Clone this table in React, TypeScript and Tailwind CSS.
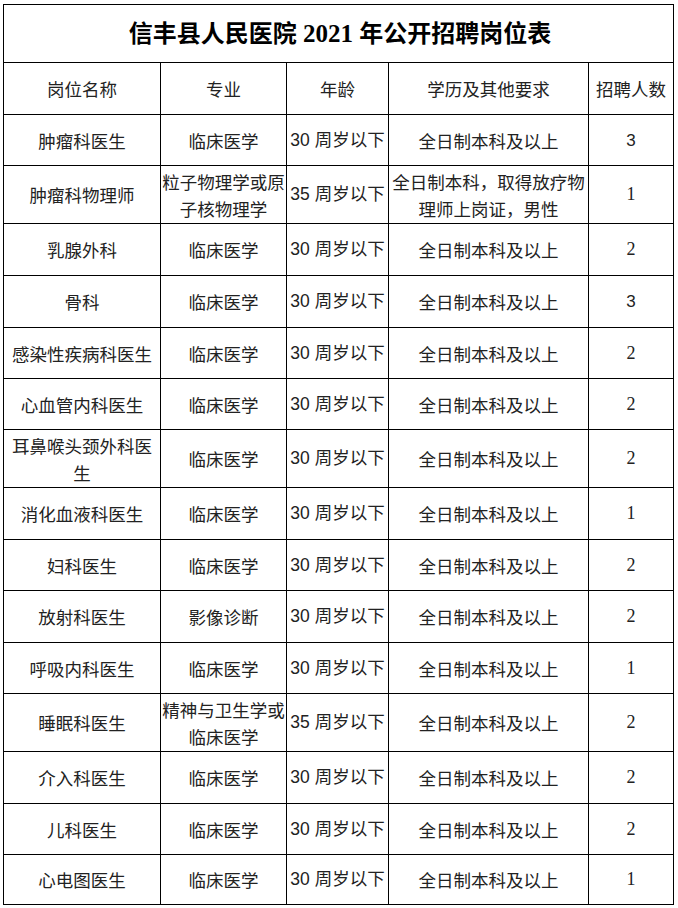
import React from "react";

type Row = {
  name: React.ReactNode;
  major: React.ReactNode;
  age: string;
  edu: React.ReactNode;
  count: string;
  h: string;
};

const rows: Row[] = [
  { name: "肿瘤科医生", major: "临床医学", age: "30 周岁以下", edu: "全日制本科及以上", count: "3", h: "h-[51px]" },
  {
    name: "肿瘤科物理师",
    major: (<>粒子物理学或原<br />子核物理学</>),
    age: "35 周岁以下",
    edu: (<>全日制本科，取得放疗物<br />理师上岗证，男性</>),
    count: "1",
    h: "h-[58px]",
  },
  { name: "乳腺外科", major: "临床医学", age: "30 周岁以下", edu: "全日制本科及以上", count: "2", h: "h-[52px]" },
  { name: "骨科", major: "临床医学", age: "30 周岁以下", edu: "全日制本科及以上", count: "3", h: "h-[52px]" },
  { name: "感染性疾病科医生", major: "临床医学", age: "30 周岁以下", edu: "全日制本科及以上", count: "2", h: "h-[51px]" },
  { name: "心血管内科医生", major: "临床医学", age: "30 周岁以下", edu: "全日制本科及以上", count: "2", h: "h-[51px]" },
  { name: (<>耳鼻喉头颈外科医<br />生</>), major: "临床医学", age: "30 周岁以下", edu: "全日制本科及以上", count: "2", h: "h-[58px]" },
  { name: "消化血液科医生", major: "临床医学", age: "30 周岁以下", edu: "全日制本科及以上", count: "1", h: "h-[52px]" },
  { name: "妇科医生", major: "临床医学", age: "30 周岁以下", edu: "全日制本科及以上", count: "2", h: "h-[51px]" },
  { name: "放射科医生", major: "影像诊断", age: "30 周岁以下", edu: "全日制本科及以上", count: "2", h: "h-[52px]" },
  { name: "呼吸内科医生", major: "临床医学", age: "30 周岁以下", edu: "全日制本科及以上", count: "1", h: "h-[51px]" },
  { name: "睡眠科医生", major: (<>精神与卫生学或<br />临床医学</>), age: "35 周岁以下", edu: "全日制本科及以上", count: "2", h: "h-[58px]" },
  { name: "介入科医生", major: "临床医学", age: "30 周岁以下", edu: "全日制本科及以上", count: "2", h: "h-[52px]" },
  { name: "儿科医生", major: "临床医学", age: "30 周岁以下", edu: "全日制本科及以上", count: "2", h: "h-[51px]" },
  { name: "心电图医生", major: "临床医学", age: "30 周岁以下", edu: "全日制本科及以上", count: "1", h: "h-[50px]" },
];

const cjk = "font-['Noto_Sans_CJK_SC',sans-serif]";
const cell =
  "flex items-center justify-center text-center border-r border-b border-black text-[17.5px] leading-[27px] text-[#222] whitespace-nowrap";

export default function App() {
  return (
    <div className="min-h-[908px] w-[678px] bg-white pt-[4px] pl-[3px]">
      <div className="grid w-[671px] grid-cols-[157px_126px_102px_200px_85px] border-l border-t border-black">
        <div className="col-span-5 flex h-[58px] items-center justify-center border-r border-b border-black pl-[3px]">
          <span className={`${cjk} text-[24px] font-bold text-black`}>
            信丰县人民医院<span className="font-['Liberation_Serif',serif] text-[25px]"> 2021 </span>年公开招聘岗位表
          </span>
        </div>

        {["岗位名称", "专业", "年龄", "学历及其他要求", "招聘人数"].map((t) => (
          <div key={t} className={`${cell} ${cjk} h-[52px]`}>
            {t}
          </div>
        ))}

        {rows.map((r, i) => (
          <React.Fragment key={i}>
            <div className={`${cell} ${cjk} ${r.h}`}>
              <div>{r.name}</div>
            </div>
            <div className={`${cell} ${cjk} ${r.h}`}>
              <div>{r.major}</div>
            </div>
            <div className={`${cell} font-['Liberation_Sans','Noto_Sans_CJK_SC',sans-serif] ${r.h}`}>
              <div>{r.age}</div>
            </div>
            <div className={`${cell} ${cjk} ${r.h}`}>
              <div>{r.edu}</div>
            </div>
            <div
              className={`${cell} ${r.h} ${
                r.count === "3"
                  ? "font-['Liberation_Sans',sans-serif] text-[17px]"
                  : "font-['Liberation_Serif',serif] text-[18px]"
              }`}
            >
              {r.count}
            </div>
          </React.Fragment>
        ))}
      </div>
    </div>
  );
}
